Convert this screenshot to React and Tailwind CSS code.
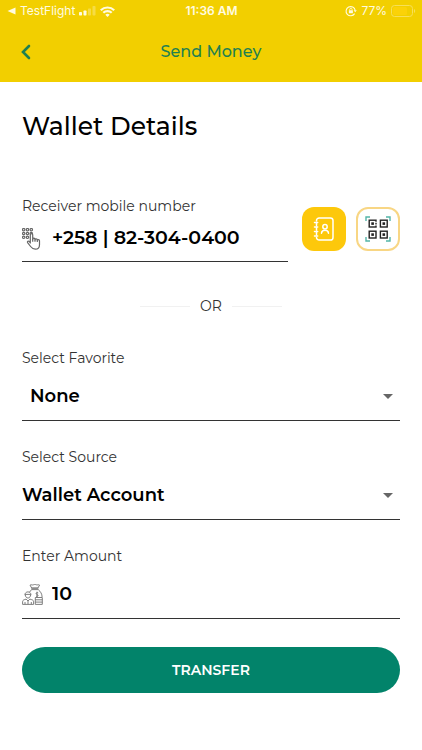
import { useState } from 'react';

function StatusBar() {
   return (
      <div className="grid h-[22px] grid-cols-[1fr_auto_1fr] items-center pr-[6px] pl-[7px] font-['Inter',sans-serif] text-xs text-[#fffbe0]">
         <div className="flex items-center gap-1">
            <svg width="9" height="8" viewBox="0 0 9 8" fill="currentColor" aria-hidden="true">
               <path d="M8.5 0.5v7L0.5 4z" />
            </svg>
            <span>TestFlight</span>
            <svg width="17" height="10" viewBox="0 0 17 10" fill="currentColor" aria-hidden="true">
               <rect x="0" y="6" width="3" height="3.5" rx="0.7" />
               <rect x="4.5" y="4.5" width="3" height="5" rx="0.7" />
               <rect x="9" y="2.5" width="3" height="7" rx="0.7" opacity="0.3" />
               <rect x="13.5" y="0" width="3" height="9.5" rx="0.7" opacity="0.3" />
            </svg>
            <svg width="15" height="11" viewBox="0 0 15 11" fill="none" stroke="currentColor" strokeWidth="2.2" aria-hidden="true">
               <path d="M0.8 4.2a9.6 9.6 0 0 1 13.4 0" />
               <path d="M3.3 6.8a6 6 0 0 1 8.4 0" />
               <path d="M7.5 11L5.3 8.8a3.1 3.1 0 0 1 4.4 0z" fill="currentColor" stroke="none" />
            </svg>
         </div>

         <span className="font-semibold">11:36 AM</span>

         <div className="flex items-center justify-end gap-1">
            <svg width="12" height="12" viewBox="0 0 12 12" fill="none" stroke="currentColor" strokeWidth="1.1" aria-hidden="true">
               <path d="M9.6 8.6A4.6 4.6 0 1 1 10.2 5.4" />
               <path d="M8.6 5.2h3.2l-1.6 2z" fill="currentColor" stroke="none" />
               <rect x="3.9" y="5.3" width="4" height="3" rx="0.4" fill="currentColor" stroke="none" />
               <path d="M4.7 5.5V4.6a1.2 1.2 0 0 1 2.4 0v0.9" strokeWidth="0.8" />
            </svg>
            <span>77%</span>
            <svg width="25" height="12" viewBox="0 0 25 12" fill="none" aria-hidden="true">
               <rect x="0.5" y="0.5" width="21" height="11" rx="3" stroke="#f7df58" />
               <rect x="2" y="2" width="14" height="8" rx="1.5" fill="#fbd208" />
               <path d="M23 4v4c1.6-0.6 1.6-3.4 0-4z" fill="#f7df58" />
            </svg>
         </div>
      </div>
   );
}

function KeypadIcon() {
   return (
      <svg width="19" height="22" viewBox="0 0 19 22" fill="none" stroke="#666" strokeWidth="1.2" strokeLinejoin="round" aria-hidden="true">
         {[1.7, 5.5, 9.3].map((y) =>
            [1.7, 5.5, 9.3].map((x) => (x === 9.3 && y === 9.3 ? null : <circle key={`${x}-${y}`} cx={x} cy={y} r="1.2" />))
         )}
         <path
            d="M8.3 15V6.8a1.2 1.2 0 0 1 2.4 0v4.4c0-1.4 2.3-1.4 2.3 0v0.6c0-1.3 2.3-1.3 2.3 0v0.7c0-1.2 2.2-1.2 2.2 0.2v4c0 2.7-1.5 4.5-4.2 4.5-2.5 0-3.5-1.1-4.7-2.7l-3-3.9c-0.7-1.1 0.8-2 1.7-1.1z"
            fill="#fff"
         />
         <path d="M10.7 11v2.8M13 11.8v2M15.3 12.5v1.6" />
      </svg>
   );
}

function MoneyIcon() {
   return (
      <svg width="21" height="21" viewBox="0 0 21 21" fill="none" stroke="#707070" strokeWidth="0.9" strokeLinejoin="round" aria-hidden="true">
         <path d="M9.7 4L8 1.2c1.5-1 2.2 0.2 3.4-0.4s1.8-0.4 3 0 1.9-0.5 3.2 0.3L15.9 4zM9.2 4.2h7.2M9.3 5.6h7.2" />
         <path d="M9.5 5.8C8.7 6.6 8 7.3 7.5 8.3M16.4 5.8c2.2 1.8 3.6 4 3.7 7.2" />
         <path d="M16.2 8.9c-1.8-1-3 1-1.2 1.6 1.9 0.5 1 2.6-1 1.6M15 7.7v5.6" />
         <path d="M3 11.2c-0.5-4.4 6.4-4.4 5.9 0M2.9 10.4h6M3.3 11c0.3 4 5 4 5.3 0" />
         <path d="M0.6 20.4v-2.7c0-1.7 1.6-2 3.5-2.6L6 17l1.9-1.9c2 0.6 3.7 0.9 3.7 2.6v2.7zM6 17v3.2M3 18v2.2M9.3 18v2.2" />
         <path d="M13.3 13.5h7v6.9h-7zM13.3 15.8h7M13.3 18.1h7" />
      </svg>
   );
}

function ContactsIcon() {
   return (
      <svg width="22" height="24" viewBox="0 0 22 24" fill="none" stroke="#fff" strokeWidth="1.5" strokeLinecap="round" strokeLinejoin="round" aria-hidden="true">
         <path d="M3.5 4V3.6A2.6 2.6 0 0 1 6.1 1h11.3A2.6 2.6 0 0 1 20 3.6v16.8a2.6 2.6 0 0 1-2.6 2.6H6.1a2.6 2.6 0 0 1-2.6-2.6" />
         <path d="M1.5 5.5h3.2M1.5 10h3.2M1.5 14.5h3.2M1.5 19h3.2M3.5 6v2.6M3.5 10.5v2.6M3.5 15v2.6" />
         <circle cx="12" cy="9.7" r="2.2" />
         <path d="M8.5 16.2c0.3-4 6.7-4 7 0" />
      </svg>
   );
}

function QrIcon() {
   const cells = [
      [4.2, 4.2],
      [15.4, 4.2],
      [4.2, 15.2],
      [15.4, 15.2]
   ];

   return (
      <svg width="26" height="26" viewBox="0 0 26 26" fill="none" aria-hidden="true">
         <path d="M1 5V1h4M21 1h4v4M25 21v4h-4M5 25H1v-4" stroke="#53b5a8" strokeWidth="1.4" />
         {cells.map(([x, y]) => (
            <g key={`${x}-${y}`}>
               <rect x={x} y={y} width="6.8" height="6.8" stroke="#222" strokeWidth="1.4" />
               <rect x={x + 2.1} y={y + 2.1} width="2.6" height="2.6" fill="#222" />
            </g>
         ))}
         <path d="M11 5.8v1M11 8.4v1" stroke="#fff" strokeWidth="2" />
      </svg>
   );
}

function SelectField({ id, label, value, onChange, options, inset }) {
   return (
      <div>
         <label htmlFor={id} className="block text-sm leading-5 text-[#333]">
            {label}
         </label>
         <div className="flex h-[53px] items-center border-b border-[#333] pt-1">
            <select
               id={id}
               value={value}
               onChange={(e) => onChange(e.target.value)}
               className={`min-w-0 flex-1 appearance-none bg-transparent text-lg font-semibold outline-none ${inset ? 'pl-2' : ''}`}
            >
               {options.map((option) => (
                  <option key={option}>{option}</option>
               ))}
            </select>
            <svg width="10" height="5" viewBox="0 0 10 5" fill="#666" className="mr-[7px]" aria-hidden="true">
               <path d="M0 0h10L5 5z" />
            </svg>
         </div>
      </div>
   );
}

export default function App() {
   const [phone, setPhone] = useState('+258 | 82-304-0400');
   const [favorite, setFavorite] = useState('None');
   const [source, setSource] = useState('Wallet Account');
   const [amount, setAmount] = useState('10');

   return (
      <div className="min-h-screen bg-white font-['Montserrat','Inter',sans-serif] text-black">
         <header className="bg-[#f2cf00]">
            <StatusBar />
            <div className="grid h-[60px] grid-cols-[1fr_auto_1fr] items-center px-5">
               <button type="button" aria-label="Back" className="w-fit cursor-pointer text-[#1f8050]">
                  <svg width="11" height="16" viewBox="0 0 11 16" fill="none" stroke="currentColor" strokeWidth="2.6" strokeLinecap="round" aria-hidden="true">
                     <path d="M9 2L3 8l6 6" />
                  </svg>
               </button>
               <span className="text-base font-medium text-[#1f8050]">Send Money</span>
            </div>
         </header>

         <main className="px-[22px] pt-7">
            <h1 className="text-[25px] leading-8 font-medium">Wallet Details</h1>

            <form onSubmit={(e) => e.preventDefault()}>
               <div className="mt-[54px] flex gap-[14px]">
                  <div className="min-w-0 flex-1">
                     <label htmlFor="phone" className="block text-sm leading-5 text-[#333]">
                        Receiver mobile number
                     </label>
                     <div className="flex h-[46px] items-center gap-[11px] border-b border-[#333]">
                        <KeypadIcon />
                        <input
                           id="phone"
                           type="tel"
                           value={phone}
                           onChange={(e) => setPhone(e.target.value)}
                           className="min-w-0 flex-1 bg-transparent text-[19px] font-semibold outline-none"
                        />
                     </div>
                  </div>

                  <div className="flex gap-[10px] pt-[11px]">
                     <button type="button" aria-label="Contacts" className="flex size-11 cursor-pointer items-center justify-center rounded-xl bg-[#fdc80b]">
                        <ContactsIcon />
                     </button>
                     <button
                        type="button"
                        aria-label="Scan QR code"
                        className="flex size-11 cursor-pointer items-center justify-center rounded-xl border-2 border-[#f8d684] bg-white"
                     >
                        <QrIcon />
                     </button>
                  </div>
               </div>

               <div className="mt-[34px] flex items-center justify-center gap-[10px] text-sm leading-5 text-[#333]">
                  <span className="h-px w-[50px] bg-[#f1f1f1]" />
                  <span>OR</span>
                  <span className="h-px w-[50px] bg-[#f1f1f1]" />
               </div>

               <div className="mt-8 flex flex-col gap-[26px]">
                  <SelectField id="favorite" label="Select Favorite" value={favorite} onChange={setFavorite} options={['None']} inset />
                  <SelectField id="source" label="Select Source" value={source} onChange={setSource} options={['Wallet Account']} />

                  <div>
                     <label htmlFor="amount" className="block text-sm leading-5 text-[#333]">
                        Enter Amount
                     </label>
                     <div className="flex h-[53px] items-center gap-[9px] border-b border-[#333] pt-1">
                        <MoneyIcon />
                        <input
                           id="amount"
                           type="text"
                           inputMode="decimal"
                           value={amount}
                           onChange={(e) => setAmount(e.target.value)}
                           className="min-w-0 flex-1 bg-transparent text-[19px] font-semibold outline-none"
                        />
                     </div>
                  </div>
               </div>

               <button type="submit" className="mt-7 h-[46px] w-full cursor-pointer rounded-full bg-[#02836a] text-sm font-semibold text-white">
                  TRANSFER
               </button>
            </form>
         </main>
      </div>
   );
}
